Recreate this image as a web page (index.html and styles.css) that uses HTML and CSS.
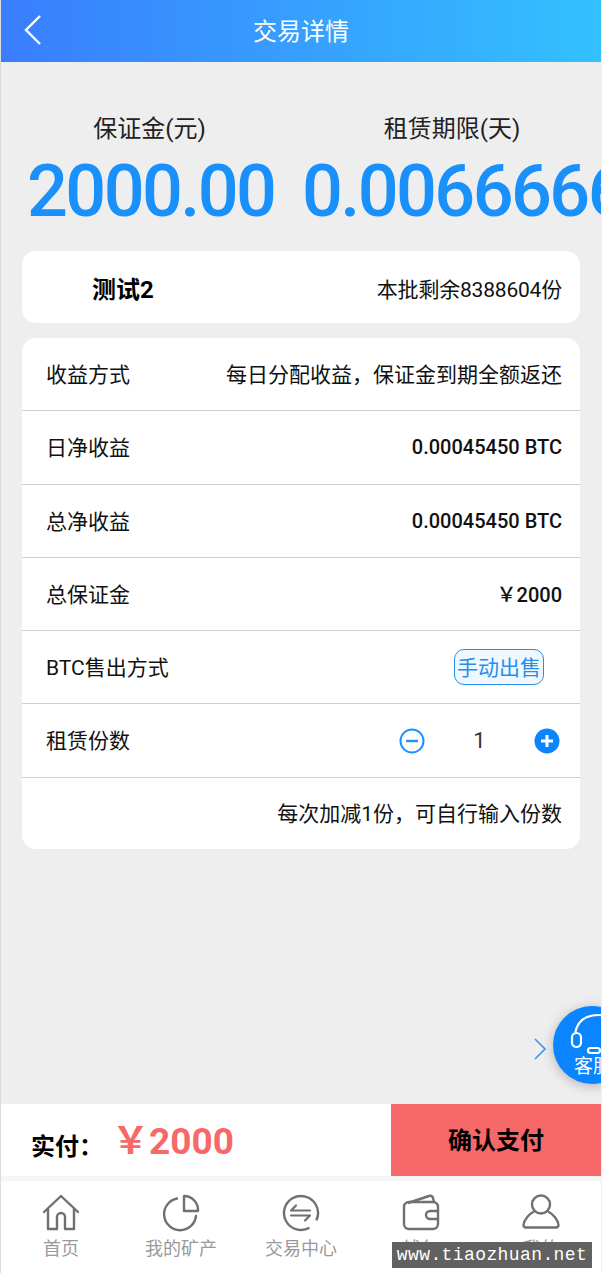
FILE: index.html
```html
<!DOCTYPE html>
<html lang="zh-CN">
<head>
    <meta charset="UTF-8">
    <meta name="viewport" content="width=device-width, initial-scale=1.0">
    <title>交易详情</title>
    <link rel="stylesheet" href="styles.css">
</head>
<body>
    <div class="page">
        <header class="topbar">
            <svg class="back" width="18" height="32" viewBox="0 0 18 32"><path d="M16 2 2 16l14 14" fill="none" stroke="#fff" stroke-width="2.4"/></svg>
            <h1>交易详情</h1>
        </header>

        <section class="summary">
            <div class="summary-col">
                <div class="summary-label">保证金(元)</div>
                <div class="summary-num">2000.00</div>
            </div>
            <div class="summary-col">
                <div class="summary-label">租赁期限(天)</div>
                <div class="summary-num">0.00666666</div>
            </div>
        </section>

        <section class="card name-card">
            <strong>测试2</strong>
            <span>本批剩余8388604份</span>
        </section>

        <section class="card detail-card">
            <div class="row"><span>收益方式</span><span>每日分配收益，保证金到期全额返还</span></div>
            <div class="row"><span>日净收益</span><span class="val">0.00045450 BTC</span></div>
            <div class="row"><span>总净收益</span><span class="val">0.00045450 BTC</span></div>
            <div class="row"><span>总保证金</span><span class="val">￥2000</span></div>
            <div class="row"><span>BTC售出方式</span><span class="tag">手动出售</span></div>
            <div class="row">
                <span>租赁份数</span>
                <div class="stepper">
                    <svg width="26" height="26" viewBox="0 0 26 26"><circle cx="13" cy="13" r="11.5" fill="none" stroke="#1e90ff" stroke-width="2"/><path d="M7 13h12" stroke="#1e90ff" stroke-width="2.4"/></svg>
                    <span class="count">1</span>
                    <svg width="26" height="26" viewBox="0 0 26 26"><circle cx="13" cy="13" r="12.5" fill="#0a84ff"/><path d="M7 13h12M13 7v12" stroke="#fff" stroke-width="3"/></svg>
                </div>
            </div>
            <div class="row row-note"><span>每次加减1份，可自行输入份数</span></div>
        </section>

        <div class="spacer"></div>

        <section class="paybar">
            <div class="pay-left">
                <span class="pay-label">实付：</span>
                <span class="pay-amount">￥2000</span>
            </div>
            <div class="pay-btn">确认支付</div>
        </section>

        <nav class="tabbar">
            <div class="tab">
                <svg width="38" height="38" viewBox="0 0 38 38"><path d="M2 18 19 2l17 16M6 15v20h9V23a4 4 0 0 1 8 0v12h9V15" fill="none" stroke="#707070" stroke-width="2.4" stroke-linejoin="round" stroke-linecap="round"/></svg>
                <span>首页</span>
            </div>
            <div class="tab">
                <svg width="38" height="38" viewBox="0 0 38 38"><path d="M15 4.500A16 16 0 1 0 34 22" fill="none" stroke="#707070" stroke-width="2.400" stroke-linecap="round"/><path d="M22 2a14 14 0 0 1 14 15H22z" fill="none" stroke="#707070" stroke-width="2.400" stroke-linejoin="round"/></svg>
                <span>我的矿产</span>
            </div>
            <div class="tab">
                <svg width="38" height="38" viewBox="0 0 38 38"><circle cx="19" cy="19" r="17" fill="none" stroke="#707070" stroke-width="2.400" stroke-dasharray="96 11" transform="rotate(60 19 19)"/><path d="M9 16.500h19M14 11.500l-5 5M9 21.500h19M28 21.500l-5 5" fill="none" stroke="#707070" stroke-width="2.200" stroke-linecap="round"/></svg>
                <span>交易中心</span>
            </div>
            <div class="tab">
                <svg width="38" height="38" viewBox="0 0 38 38"><path d="M6 9 27 2q3-1 4 2l1 4" fill="none" stroke="#707070" stroke-width="2.400"/><rect x="2" y="8" width="34" height="27" rx="5" fill="none" stroke="#707070" stroke-width="2.400"/><path d="M36 17h-8a4 4 0 0 0 0 8h8" fill="none" stroke="#707070" stroke-width="2.400"/></svg>
                <span>钱包</span>
            </div>
            <div class="tab">
                <svg width="38" height="38" viewBox="0 0 38 38"><circle cx="19" cy="10.500" r="9" fill="none" stroke="#707070" stroke-width="2.400"/><path d="M12 17.500C7 20 2 26 1.500 31q0 2.500 2.500 2.500h30q2.500 0 2.500-2.500C36 26 31 20 26 17.500" fill="none" stroke="#707070" stroke-width="2.400"/></svg>
                <span>我的</span>
            </div>
        </nav>

        <!-- floating service button -->
        <svg class="float-arrow" width="12" height="22" viewBox="0 0 12 22"><path d="M1 1l10 10L1 21" fill="none" stroke="#3f97ef" stroke-width="1.600"/></svg>
        <div class="service">
            <svg width="78" height="78" viewBox="0 0 78 78"><path d="M22 28Q25 9 46 9t26 19" fill="none" stroke="#fff" stroke-width="2.200"/><rect x="19" y="27" width="9" height="14" rx="4.500" fill="none" stroke="#fff" stroke-width="2.200"/><rect x="35" y="42" width="12" height="5" rx="2.500" fill="none" stroke="#fff" stroke-width="2.200"/><path d="M47 44q14 0 22-6" fill="none" stroke="#fff" stroke-width="2.200"/></svg>
            <span>客服</span>
        </div>

        <div class="watermark">www.tiaozhuan.net</div>
    </div>
</body>
</html>
```

FILE: styles.css
```css
* {
    box-sizing: border-box;
}
body {
    margin: 0;
    background: #f4f4f4;
    font-family: Roboto, "Noto Sans CJK SC", sans-serif;
    color: #111;
}
.page {
    position: relative;
    width: 602px;
    height: 1273px;
    overflow: hidden;
    display: flex;
    flex-direction: column;
    background: #eeeeee;
    border-left: 1px solid #dcdcdc;
    border-right: 1px solid #f0f0f0;
}
.topbar {
    height: 62px;
    flex: none;
    position: relative;
    display: flex;
    align-items: center;
    justify-content: center;
    padding-bottom: 4px;
    background: linear-gradient(90deg, #3a7dfe, #33c1ff);
}
.topbar h1 {
    margin: 0;
    font-size: 24px;
    font-weight: 400;
    color: #fff;
}
.back {
    position: absolute;
    left: 23px;
    top: 14px;
}
.summary {
    display: flex;
    margin-top: 48px;
    padding-left: 26px;
    gap: 30px;
    height: 141px;
    flex: none;
}
.summary-col {
    flex: none;
    width: 245px;
}
.summary-col:last-child {
    width: 300px;
}
.summary-label {
    font-size: 24px;
    line-height: 38px;
    text-align: center;
    color: #222;
}
.summary-num {
    font-size: 72px;
    line-height: 84px;
    margin-top: 2px;
    font-weight: 500;
    letter-spacing: -2.6px;
    color: #1a90fb;
    white-space: nowrap;
}
.card {
    margin: 0 21px;
    background: #fff;
    border-radius: 14px;
    flex: none;
}
.name-card {
    height: 72px;
    display: flex;
    align-items: center;
    justify-content: space-between;
    padding: 0 18px 0 70px;
    font-size: 21px;
}
.name-card strong {
    font-size: 24px;
    color: #000;
}
.name-card span {
    padding-top: 2px;
    letter-spacing: -0.2px;
}
.detail-card {
    margin-top: 15px;
}
.row {
    height: 73.25px;
    display: flex;
    align-items: center;
    justify-content: space-between;
    padding: 0 18px 2px 24px;
    border-bottom: 1px solid #cfcfcf;
    font-size: 21px;
    color: #111;
}
.row:last-child {
    height: 71.5px;
    border-bottom: 0;
    justify-content: flex-end;
}
.val {
    padding-top: 2px;
    font-size: 20px;
    font-weight: 500;
}
.tag {
    width: 90px;
    height: 36px;
    margin: 2px 18px 0 0;
    line-height: 36px;
    text-align: center;
    font-size: 21px;
    color: #2a8ee8;
    background: #eff8ff;
    border: 1px solid #2a8ee8;
    border-radius: 10px;
}
.stepper {
    display: flex;
    align-items: center;
    margin: 3px 2px 0 0;
}
.stepper svg {
    display: block;
}
.count {
    width: 109px;
    text-align: center;
    font-size: 22px;
    color: #333;
}
.spacer {
    flex: 1;
}
.paybar {
    height: 72px;
    flex: none;
    display: flex;
    background: #fff;
}
.pay-left {
    flex: 1;
    display: flex;
    align-items: center;
    padding-left: 30px;
}
.pay-label {
    width: 81px;
    padding-top: 9px;
    font-size: 24px;
    font-weight: 700;
    color: #000;
}
.pay-amount {
    padding-bottom: 4px;
    font-size: 37px;
    font-weight: 700;
    color: #f76868;
}
.pay-btn {
    width: 210px;
    display: flex;
    align-items: center;
    justify-content: center;
    padding-bottom: 4px;
    background: #f76868;
    font-size: 24px;
    font-weight: 700;
    color: #000;
}
.tabbar {
    height: 97px;
    flex: none;
    display: flex;
    background: #fff;
    border-top: 5px solid #f6f6f6;
    padding-top: 13px;
}
.tab {
    flex: 1;
    display: flex;
    flex-direction: column;
    align-items: center;
    gap: 2px;
    font-size: 18px;
    color: #999;
}
.tab svg {
    display: block;
}
.float-arrow {
    position: absolute;
    left: 533px;
    top: 1038px;
}
.service {
    position: absolute;
    left: 552px;
    top: 1006px;
    width: 78px;
    height: 78px;
    border-radius: 50%;
    background: #0a84ff;
    box-shadow: 0 2px 12px rgba(0, 0, 0, 0.25);
    color: #fff;
    font-size: 19px;
    line-height: 20px;
    overflow: hidden;
}
.service svg {
    position: absolute;
    left: 0;
    top: 0;
}
.service span {
    position: absolute;
    left: 21px;
    top: 51px;
    white-space: nowrap;
}
.watermark {
    position: absolute;
    left: 391px;
    top: 1242px;
    width: 200px;
    height: 26px;
    background: #616161;
    color: #fff;
    font-family: "Liberation Mono", monospace;
    font-size: 18px;
    line-height: 26px;
    letter-spacing: 0.4px;
    text-align: center;
    white-space: nowrap;
}
```
